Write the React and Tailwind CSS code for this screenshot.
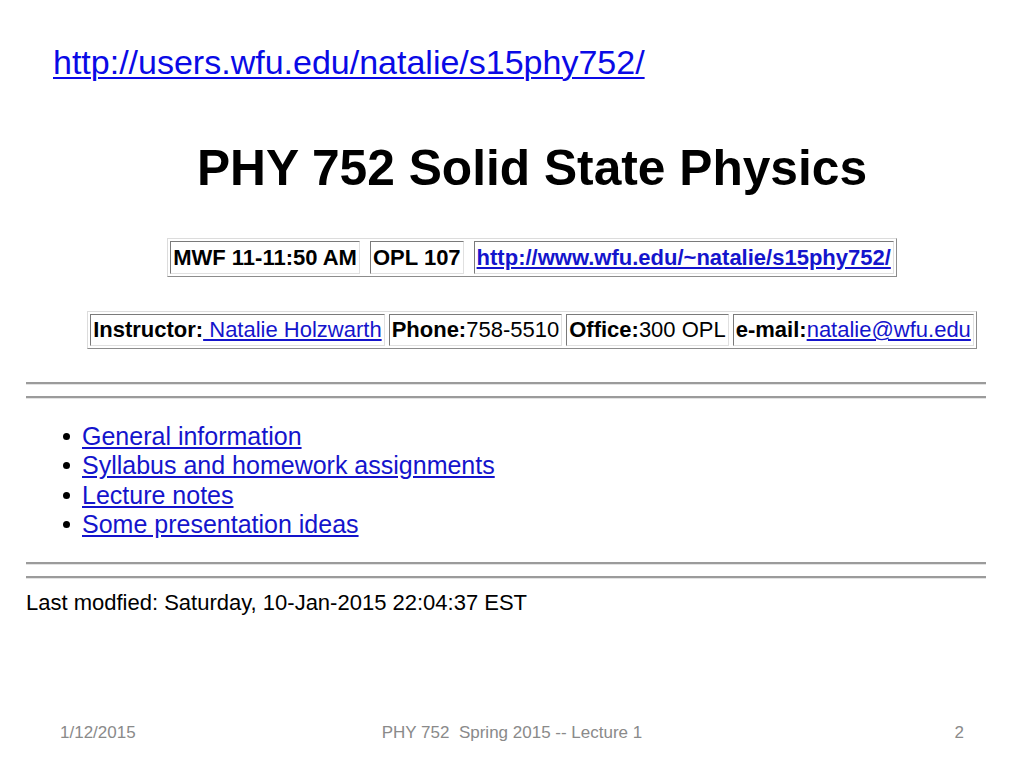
import React from 'react';

// Slide showing a course web page
const Rule = ({ mt }) => (
  <div className={`ml-[26px] w-[960px] h-[3px] border-t-2 border-t-[#9b9b9b] border-b border-b-[#e3e3e3] ${mt}`} />
);

const Cell1 = ({ children }) => (
  <div className="border border-t-[#7a7a7a] border-l-[#7a7a7a] border-r-[#e0e0e0] border-b-[#e0e0e0] px-[2px] leading-[31px] whitespace-nowrap">
    {children}
  </div>
);

const Cell2 = ({ children }) => (
  <div className="border border-t-[#7a7a7a] border-l-[#7a7a7a] border-r-[#e0e0e0] border-b-[#e0e0e0] px-[2px] leading-[30px] whitespace-nowrap">
    {children}
  </div>
);

const links = [
  'General information',
  'Syllabus and homework assignments',
  'Lecture notes',
  'Some presentation ideas',
];

const App = () => {
  return (
    <div className="w-[1024px] h-[768px] overflow-hidden bg-white text-black font-['Liberation_Sans',Arial,sans-serif]">
      {/* page URL */}
      <div className="pt-[43px] pl-[53px] text-[34px] leading-[38px]">
        <span className="text-[#0a0ae6] underline decoration-[2px] underline-offset-[3px]">
          http://users.wfu.edu/natalie/s15phy752/
        </span>
      </div>

      {/* centered header of the web page */}
      <div className="pl-[40px] flex flex-col items-center">
        <h1 className="mt-[59px] text-[49.7px] leading-[56px] font-bold">PHY 752 Solid State Physics</h1>

        <div className="mt-[42px] flex gap-[10px] p-[2px] border border-t-[#dcdcdc] border-l-[#dcdcdc] border-r-[#8c8c8c] border-b-[#8c8c8c] text-[22px] font-bold">
          <Cell1>MWF 11-11:50 AM</Cell1>
          <Cell1>OPL 107</Cell1>
          <Cell1>
            <span className="text-[#1414cc] underline">http://www.wfu.edu/~natalie/s15phy752/</span>
          </Cell1>
        </div>

        <div className="mt-[34px] flex gap-[4px] p-[2px] border border-t-[#dcdcdc] border-l-[#dcdcdc] border-r-[#8c8c8c] border-b-[#8c8c8c] text-[22px]">
          <Cell2>
            <span className="font-bold">Instructor:</span>
            <span className="text-[#1414cc] underline"> Natalie Holzwarth</span>
          </Cell2>
          <Cell2>
            <span className="font-bold">Phone:</span>758-5510
          </Cell2>
          <Cell2>
            <span className="font-bold">Office:</span>300 OPL
          </Cell2>
          <Cell2>
            <span className="font-bold">e-mail:</span>
            <span className="text-[#1414cc] underline">natalie@wfu.edu</span>
          </Cell2>
        </div>
      </div>

      <Rule mt="mt-[33px]" />
      <Rule mt="mt-[11px]" />

      {/* link list */}
      <ul className="mt-[23px] text-[25px] leading-[29.3px]">
        {links.map((l) => (
          <li key={l} className="flex items-center">
            <span className="ml-[63px] mr-[12px] w-[7px] h-[7px] rounded-full bg-black" />
            <span className="text-[#1414cc] underline">{l}</span>
          </li>
        ))}
      </ul>

      <Rule mt="mt-[23px]" />
      <Rule mt="mt-[11px]" />

      <div className="mt-[11px] pl-[26px] text-[22px] leading-[26px]">
        Last modfied: Saturday, 10-Jan-2015 22:04:37 EST
      </div>

      {/* slide footer */}
      <div className="mt-[107px] grid grid-cols-3 text-[17px] leading-[20px] text-[#8a8a8a]">
        <div className="pl-[60px]">1/12/2015</div>
        <div className="text-center">PHY 752&nbsp; Spring 2015 -- Lecture 1</div>
        <div className="text-right pr-[60px]">2</div>
      </div>
    </div>
  );
};

export default App;
